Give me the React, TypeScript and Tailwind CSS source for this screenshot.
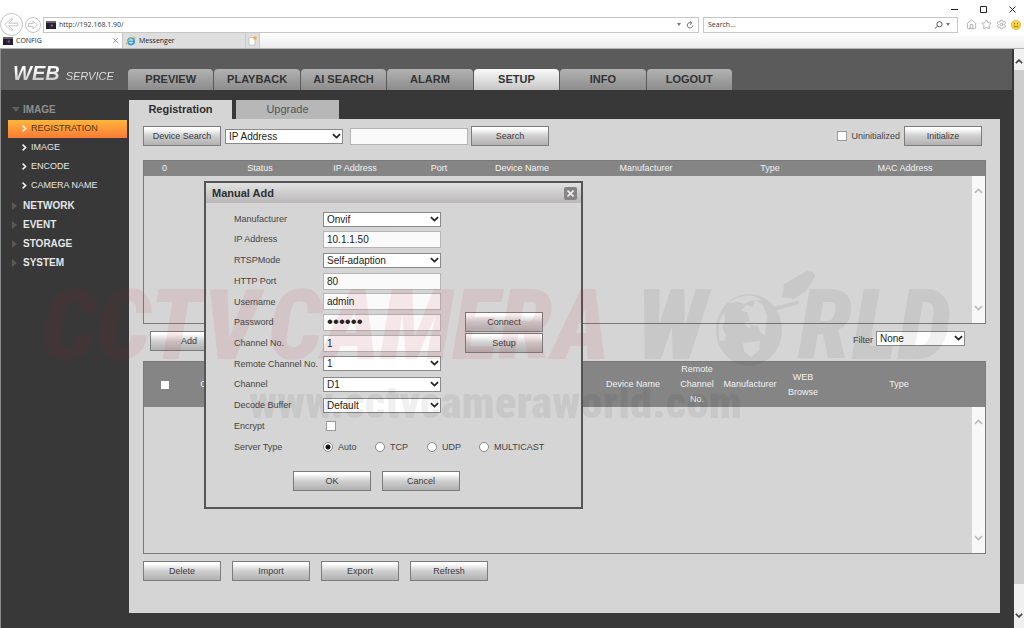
import type { ReactNode } from 'react';
import { House, Settings, Star } from 'lucide-react';

const navTabs = ['PREVIEW', 'PLAYBACK', 'AI SEARCH', 'ALARM', 'SETUP', 'INFO', 'LOGOUT'];
const imageMenu = ['REGISTRATION', 'IMAGE', 'ENCODE', 'CAMERA NAME'];
const otherMenus = ['NETWORK', 'EVENT', 'STORAGE', 'SYSTEM'];

const searchColumns = [
  { label: '0', width: 'w-[77px] pr-9' },
  { label: 'Status', width: 'w-[78px]' },
  { label: 'IP Address', width: 'w-28' },
  { label: 'Port', width: 'w-14' },
  { label: 'Device Name', width: 'w-[110px]' },
  { label: 'Manufacturer', width: 'w-[138px]' },
  { label: 'Type', width: 'w-[110px]' },
  { label: 'MAC Address', width: '' },
];

const serverTypes = ['Auto', 'TCP', 'UDP', 'MULTICAST'];

function Chevron({ className, up = false, weight = 2 }: { className: string; up?: boolean; weight?: number }) {
  return (
    <svg viewBox="0 0 10 6" className={className} fill="none" stroke="currentColor" strokeWidth={weight}>
      <path d={up ? 'M1 5 5 1.2 9 5' : 'M1 1 5 4.8 9 1'} />
    </svg>
  );
}

function Button({ children, className = '' }: { children: ReactNode; className?: string }) {
  return (
    <button
      type="button"
      className={`h-5 w-[78px] shrink-0 border border-[#7c7c7c] bg-linear-to-b from-white from-10% via-[#d0cfcf] via-50% to-[#b2b0b0] text-center text-[9px] leading-none text-[#3c3c3c] ${className}`}
    >
      {children}
    </button>
  );
}

function Select({ id, value, label, className = 'w-[118px]' }: { id: string; value: string; label?: string; className?: string }) {
  return (
    <div className={`relative shrink-0 ${className}`}>
      <select
        id={id}
        aria-label={label}
        defaultValue={value}
        className="block h-[15px] w-full appearance-none border border-[#8a8a8a] bg-white pl-[3px] text-[10px] leading-[13px] text-[#222]"
      >
        <option>{value}</option>
      </select>
      <Chevron className="pointer-events-none absolute top-1 right-[2px] h-[6px] w-[9px] text-[#222]" />
    </div>
  );
}

const inputClass =
  'block h-[17px] w-[118px] shrink-0 border border-[#b5b5b5] bg-[#fafafa] px-[3px] leading-none text-[#222]';
const checkClass = 'size-[10px] shrink-0 appearance-none border border-[#9a9a9a] bg-white checked:bg-[#444]';

function CameraIcon() {
  return (
    <svg viewBox="0 0 10 8" className="h-2 w-[10px] shrink-0">
      <rect width="10" height="8" fill="#222" />
      <rect width="10" height="2" fill="#666" />
      <circle cx="5.5" cy="4.6" r="2.4" fill="#3b2458" />
      <circle cx="5.8" cy="4.4" r="1" fill="#9a5fb0" />
    </svg>
  );
}

function BrowserChrome() {
  return (
    <header className="border-b border-[#b4b4b4] bg-linear-to-b from-white from-70% to-[#ebebeb] font-['Open_Sans',sans-serif] text-[7px] text-[#333]">
      <div className="flex h-4 items-end justify-end gap-[22px] pr-2 pb-[3px]">
        <button type="button" aria-label="Minimize">
          <svg viewBox="0 0 7 7" className="size-[7px]" stroke="#222"><path d="M0 3.5h7" /></svg>
        </button>
        <button type="button" aria-label="Maximize">
          <svg viewBox="0 0 7 7" className="size-[7px]" fill="none" stroke="#222"><path d="M.5.5h6v6h-6z" /></svg>
        </button>
        <button type="button" aria-label="Close">
          <svg viewBox="0 0 7 7" className="size-[7px]" stroke="#222"><path d="m.5.5 6 6m0-6-6 6" /></svg>
        </button>
      </div>
      <div className="flex h-[17px] items-center">
        <button type="button" aria-label="Back" className="relative z-10 -my-1 shrink-0">
          <svg viewBox="0 0 23 23" className="size-[23px]" fill="#fff" stroke="#c4c4c4">
            <circle cx="11.5" cy="11.5" r="11" />
            <path d="M10.500 6 5 11.500l5.500 5.500h2.300l-4-4.200H18v-2.600H8.800l4-4.200z" strokeLinejoin="round" />
          </svg>
        </button>
        <button type="button" aria-label="Forward" className="ml-[2px] shrink-0">
          <svg viewBox="0 0 16 16" className="size-4" fill="#fff" stroke="#c4c4c4">
            <circle cx="8" cy="8" r="7.500" />
            <path d="M3.500 6.500h4.500V4l4.500 4L8 12V9.500H3.500z" strokeLinejoin="round" />
          </svg>
        </button>
        <div className="ml-[2px] flex h-4 flex-1 items-center gap-[3px] border border-[#c6c6c6] bg-white px-[2px]">
          <CameraIcon />
          <input aria-label="Address" defaultValue="http://192.168.1.90/" className="h-3 min-w-0 flex-1" />
          <svg viewBox="0 0 4 3" className="h-[3px] w-1" fill="#777"><path d="M0 0h4L2 3z" /></svg>
          <button type="button" aria-label="Reload" className="mx-[2px]">
            <svg viewBox="0 0 8 8" className="size-2" fill="none" stroke="#666">
              <path d="M5.500 2A2.700 2.700 0 1 0 6.700 4.500M4 .5 5.800 2 4 3.600" />
            </svg>
          </button>
        </div>
        <div className="ml-1 flex h-4 w-[255px] items-center border border-[#c6c6c6] bg-white px-1">
          <input aria-label="Search the web" placeholder="Search..." className="h-3 min-w-0 flex-1 placeholder:text-[#333]" />
          <svg viewBox="0 0 9 8" className="h-2 w-[9px]" fill="none" stroke="#555">
            <circle cx="5.500" cy="3.200" r="2.600" />
            <path d="M3.600 5 .8 7.600" />
          </svg>
          <svg viewBox="0 0 4 3" className="mx-[3px] h-[3px] w-1" fill="#777"><path d="M0 0h4L2 3z" /></svg>
        </div>
        <div className="flex w-[66px] items-center justify-end gap-1 pr-[3px] text-[#aaa]">
          <House size={11} strokeWidth={2} />
          <Star size={11} strokeWidth={2} />
          <Settings size={11} strokeWidth={2} />
          <svg viewBox="0 0 10 10" className="size-[10px]">
            <circle cx="5" cy="5" r="4.600" fill="#f7cf3c" stroke="#e0b020" strokeWidth=".6" />
            <path d="M3.500 3v1.200M6.500 3v1.200M2.800 6q2.200 2.200 4.400 0" fill="none" stroke="#8a6a10" strokeWidth=".8" />
          </svg>
        </div>
      </div>
      <div className="flex h-[15px] items-stretch text-[#222]">
        <div className="flex w-[122px] items-center gap-[3px] bg-white pr-1 pl-[3px]">
          <CameraIcon />
          <span className="flex-1 pt-px">CONFIG</span>
          <svg viewBox="0 0 5 5" className="size-[5px]" stroke="#888"><path d="m.3.3 4.400 4.400m0-4.400L.3 4.700" /></svg>
        </div>
        <div className="flex w-[124px] items-center gap-[3px] border-x border-[#c8c8c8] bg-[#dedede] px-[3px]">
          <svg viewBox="0 0 10 10" className="size-[10px]" fill="none">
            <circle cx="5" cy="5.300" r="3.200" stroke="#35a0dc" strokeWidth="1.800" />
            <path d="M2.500 5.300h5.500" stroke="#35a0dc" strokeWidth="1.300" />
            <path d="M.8 9C-.5 6 5 .5 9 1c1 .5.300 1.700 0 2.200" stroke="#edbd3a" />
          </svg>
          <span className="pt-px">Messenger</span>
        </div>
        <button type="button" aria-label="New tab" className="flex w-[14px] items-center justify-center border-r border-[#c8c8c8] bg-[#dedede]">
          <svg viewBox="0 0 9 10" className="h-[10px] w-[9px]">
            <path d="M1 1.500h4.500L7 3v6H1z" fill="#fff" stroke="#aaa" strokeWidth=".6" />
            <circle cx="7" cy="2" r="1.800" fill="#f2ae3e" />
          </svg>
        </button>
      </div>
    </header>
  );
}

function Sidebar() {
  return (
    <nav className="w-32 shrink-0 border-l border-[#8c8c8c] pt-[10px] text-[10px] font-bold text-[#e6e6e6]">
      <a href="#image" className="flex h-[19px] items-center text-[#8f8f8f]">
        <svg viewBox="0 0 8 5" className="ml-[11px] mr-[3px] h-[5px] w-2" fill="#625e59"><path d="M0 0h8L4 5z" /></svg>
        IMAGE
      </a>
      <ul className="pb-px text-[9px] font-normal">
        {imageMenu.map((item, i) => (
          <li key={item} className="flex h-[19px] items-center">
            <a
              href="#registration"
              className={`ml-[7px] flex h-[18px] flex-1 items-center gap-1 pl-[14px] ${
                i === 0 ? 'mr-px bg-linear-to-b from-[#ffb53a] to-[#fb7a35] text-[#4a3520]' : ''
              }`}
            >
              <svg viewBox="0 0 5 7" className="h-[7px] w-[5px]" fill="none" stroke="#f2f2f2" strokeWidth="1.600">
                <path d="m.6.6 3 2.900-3 2.900" />
              </svg>
              {item}
            </a>
          </li>
        ))}
      </ul>
      {otherMenus.map((item) => (
        <a key={item} href="#menu" className="flex h-[19px] items-center">
          <svg viewBox="0 0 5 8" className="mr-[6px] ml-[11px] h-2 w-[5px]" fill="#5b5854"><path d="M0 0v8l5-4z" /></svg>
          {item}
        </a>
      ))}
    </nav>
  );
}

function ListBody({ className }: { className: string }) {
  return (
    <div className={`flex justify-end ${className}`}>
      <div className="flex w-[13px] flex-col items-center justify-between bg-[#f8f8f8] py-3 text-[#bdbdbd]">
        <Chevron up className="h-[6px] w-[9px]" />
        <Chevron className="h-[6px] w-[9px]" />
      </div>
    </div>
  );
}

function FieldRow({ label, htmlFor, children }: { label: string; htmlFor: string; children: ReactNode }) {
  return (
    <div className="flex h-5 items-center">
      <label htmlFor={htmlFor} className="w-[89px] shrink-0 pt-px whitespace-nowrap">{label}</label>
      {children}
    </div>
  );
}

function ManualAddDialog() {
  return (
    <section
      role="dialog"
      aria-label="Manual Add"
      className="absolute top-[62px] left-[75px] w-[379px] border-2 border-[#555] bg-[#d5d5d5] pb-4 text-[9px] text-[#444]"
    >
      <div className="flex h-5 items-center justify-between bg-linear-to-b from-[#e2e2e2] to-[#b9b7b7] pr-1 pl-[6px]">
        <h2 className="text-[11px] leading-4 font-bold text-[#2e2e2e]">Manual Add</h2>
        <button type="button" aria-label="Close dialog" className="flex size-[13px] items-center justify-center rounded-xs bg-[#858585]">
          <svg viewBox="0 0 7 7" className="size-[7px]" stroke="#eee" strokeWidth="1.600"><path d="m.5.5 6 6m0-6-6 6" /></svg>
        </button>
      </div>
      <div className="mt-[6px] flex pl-7">
        <div className="flex h-[227px] flex-col justify-between">
          <FieldRow label="Manufacturer" htmlFor="manufacturer"><Select id="manufacturer" value="Onvif" /></FieldRow>
          <FieldRow label="IP Address" htmlFor="ip"><input id="ip" defaultValue="10.1.1.50" className={`${inputClass} text-[10px]`} /></FieldRow>
          <FieldRow label="RTSPMode" htmlFor="rtsp"><Select id="rtsp" value="Self-adaption" /></FieldRow>
          <FieldRow label="HTTP Port" htmlFor="port"><input id="port" defaultValue="80" className={`${inputClass} text-[10px]`} /></FieldRow>
          <FieldRow label="Username" htmlFor="user"><input id="user" defaultValue="admin" className={`${inputClass} text-[10px]`} /></FieldRow>
          <FieldRow label="Password" htmlFor="pass"><input id="pass" type="password" defaultValue="secret" className={`${inputClass} text-[17px]`} /></FieldRow>
          <FieldRow label="Channel No." htmlFor="channels"><input id="channels" defaultValue="1" className={`${inputClass} text-[10px]`} /></FieldRow>
          <FieldRow label="Remote Channel No." htmlFor="remote"><Select id="remote" value="1" /></FieldRow>
          <FieldRow label="Channel" htmlFor="channel"><Select id="channel" value="D1" /></FieldRow>
          <FieldRow label="Decode Buffer" htmlFor="buffer"><Select id="buffer" value="Default" /></FieldRow>
          <FieldRow label="Encrypt" htmlFor="encrypt"><input id="encrypt" type="checkbox" className={`ml-[3px] ${checkClass}`} /></FieldRow>
        </div>
        <div className="ml-6 flex flex-col gap-px pt-[103px]">
          <Button>Connect</Button>
          <Button>Setup</Button>
        </div>
      </div>
      <div role="radiogroup" aria-labelledby="server-type" className="mt-px flex h-5 items-center pl-7">
        <span id="server-type" className="w-[89px] shrink-0 pt-px">Server Type</span>
        {serverTypes.map((type) => (
          <label key={type} className="flex w-[52px] shrink-0 items-center gap-[5px]">
            <input
              type="radio"
              name="server-type"
              defaultChecked={type === 'Auto'}
              className="size-[10px] shrink-0 appearance-none rounded-full border border-[#8a8a8a] bg-white checked:bg-[radial-gradient(circle,#111_0_2px,#fff_3px)]"
            />
            <span className="pt-px">{type}</span>
          </label>
        ))}
      </div>
      <div className="mt-[14px] flex gap-[11px] pl-[87px]">
        <Button>OK</Button>
        <Button>Cancel</Button>
      </div>
    </section>
  );
}

function RegistrationPanel() {
  return (
    <div className="relative flex-1 bg-[#d5d5d5] px-[14px] pt-[7px] pb-8 text-[9px] text-[#444]">
      <div className="flex items-center">
        <Button>Device Search</Button>
        <Select id="search-by" label="Search by" value="IP Address" className="ml-1 w-[118px]" />
        <input aria-label="Search value" className={`ml-[7px] ${inputClass} text-[10px]`} />
        <Button className="ml-[3px]">Search</Button>
        <div className="mr-1 ml-auto flex items-center">
          <input id="uninitialized" type="checkbox" className={checkClass} />
          <label htmlFor="uninitialized" className="mx-1 pt-px">Uninitialized</label>
          <Button>Initialize</Button>
        </div>
      </div>

      <div className="mt-[14px] border border-[#7b7b7b]">
        <table className="w-full table-fixed bg-[#858585] text-[#f2f2f2]">
          <thead>
            <tr className="h-[15px]">
              {searchColumns.map((col) => (
                <th key={col.label} className={`font-normal ${col.width}`}>{col.label}</th>
              ))}
            </tr>
          </thead>
        </table>
        <ListBody className="h-[147px]" />
      </div>

      <div className="flex h-[37px] items-start pt-[7px] pr-[21px] pl-[7px]">
        <Button>Add</Button>
        <label htmlFor="filter" className="mr-[3px] ml-auto pt-[3px]">Filter</label>
        <Select id="filter" value="None" className="w-[89px]" />
      </div>

      <div className="border border-[#7b7b7b]">
        <table className="w-full table-fixed bg-[#858585] leading-[15px] text-[#f2f2f2]">
          <thead>
            <tr className="h-[45px]">
              <th className="w-[42px]">
                <input type="checkbox" aria-label="Select all" className="mx-auto block size-2 appearance-none bg-white" />
              </th>
              <th className="w-[62px] font-normal">Channel</th>
              <td />
              <th className="w-[78px] font-normal">Device Name</th>
              <th className="w-[50px] font-normal">Remote Channel No.</th>
              <th className="w-14 font-normal">Manufacturer</th>
              <th className="w-[50px] px-1 font-normal">WEB Browse</th>
              <th className="w-[157px] pr-[15px] font-normal">Type</th>
            </tr>
          </thead>
        </table>
        <ListBody className="h-[146px]" />
      </div>

      <div className="mt-[7px] flex gap-[11px]">
        <Button>Delete</Button>
        <Button>Import</Button>
        <Button>Export</Button>
        <Button>Refresh</Button>
      </div>

      <ManualAddDialog />
    </div>
  );
}

function Watermark() {
  return (
    <svg
      viewBox="0 0 1024 628"
      className="pointer-events-none absolute inset-x-0 top-0 w-full"
      fontFamily="'Liberation Sans Narrow', 'Roboto Condensed', 'Liberation Sans', sans-serif"
      fontWeight="900"
    >
      <g fontStyle="italic" fontSize="98" fill="#be1e2d" opacity=".08">
        <text x="42" y="359">CCTV</text>
        <text x="268" y="359">CAMERA</text>
      </g>
      <g fill="#000" opacity=".055">
        <g fontStyle="italic" fontSize="98">
          <text x="636" y="359">W</text>
          <text x="798" y="359">RLD</text>
        </g>
        <path
          fillRule="evenodd"
          d="M749 294a33 36 0 1 0 .1 0zM728 303q12-9 26-7l8 4-12 1-6 3-5-2zM755 300l8 5 4 11-2 20-5-4-2-6-7-1-2 4-5-6 6-2-3-9-6-1 5-6 7 2zM743 343l17-2-1 9-8 7-7-6zM719 322l5-9 1 8-3 6 4 8-1 5-6 1z"
        />
        <path d="m784 284 23-13q9 0 8 6l-9 14-12 8-12-2z" />
        <path d="m788 284 13-8 3 1-3 14-12 5zM773 307l25-6 1 3-24 7z" />
        <text x="249" y="418" fontSize="45">www.cctvcameraworld.com</text>
      </g>
    </svg>
  );
}

export default function App() {
  return (
    <div className="relative flex min-h-screen flex-col overflow-hidden bg-[#383838] font-['Liberation_Sans',Arial,sans-serif]">
      <BrowserChrome />
      <div className="flex flex-1">
        <div className="flex min-w-0 flex-1 flex-col">
          <div className="mr-[2px] flex h-[41px] items-end border-l border-[#8c8c8c] bg-[#5b5b5b]">
            <h1 className="flex w-[127px] shrink-0 items-baseline gap-[6px] bg-linear-to-b from-white from-30% to-[#999] bg-clip-text pb-[5px] pl-3 italic text-transparent">
              <span className="text-[20px] leading-6 font-bold">WEB</span>
              <span className="text-[11px]">SERVICE</span>
            </h1>
            <nav className="flex max-w-[604px] flex-1 gap-px">
              {navTabs.map((tab) => (
                <a
                  key={tab}
                  href="#tab"
                  className={`flex h-[21px] flex-1 items-center justify-center rounded-t-[4px] text-[11px] font-bold text-[#333] ${
                    tab === 'SETUP'
                      ? 'bg-linear-to-b from-[#fafafa] to-[#c6c6c6]'
                      : 'bg-linear-to-b from-[#b2b2b2] to-[#8c8c8c]'
                  }`}
                >
                  {tab}
                </a>
              ))}
            </nav>
          </div>
          <div className="flex flex-1">
            <Sidebar />
            <main className="mr-[14px] mb-[15px] ml-px flex min-w-0 flex-1 flex-col pt-[10px]">
              <div className="flex gap-1 text-[11px]">
                <a href="#registration" className="flex h-[19px] w-[103px] items-center justify-center bg-[#d5d5d5] font-bold text-[#2e2e2e]">
                  Registration
                </a>
                <a href="#upgrade" className="flex h-[19px] w-[103px] items-center justify-center bg-[#b7b7b7] text-[#555]">
                  Upgrade
                </a>
              </div>
              <RegistrationPanel />
            </main>
          </div>
        </div>
        <div className="flex w-[10px] shrink-0 flex-col bg-[#cdcdcd] text-[#444]">
          <div className="flex h-[21px] items-center justify-center bg-[#f0f0f0] pt-1">
            <Chevron up className="h-[5px] w-2" />
          </div>
          <div className="mt-auto flex h-11 items-end justify-center bg-[#f0f0f0] pb-[10px]">
            <Chevron className="h-[5px] w-2" />
          </div>
        </div>
      </div>
      <Watermark />
    </div>
  );
}
